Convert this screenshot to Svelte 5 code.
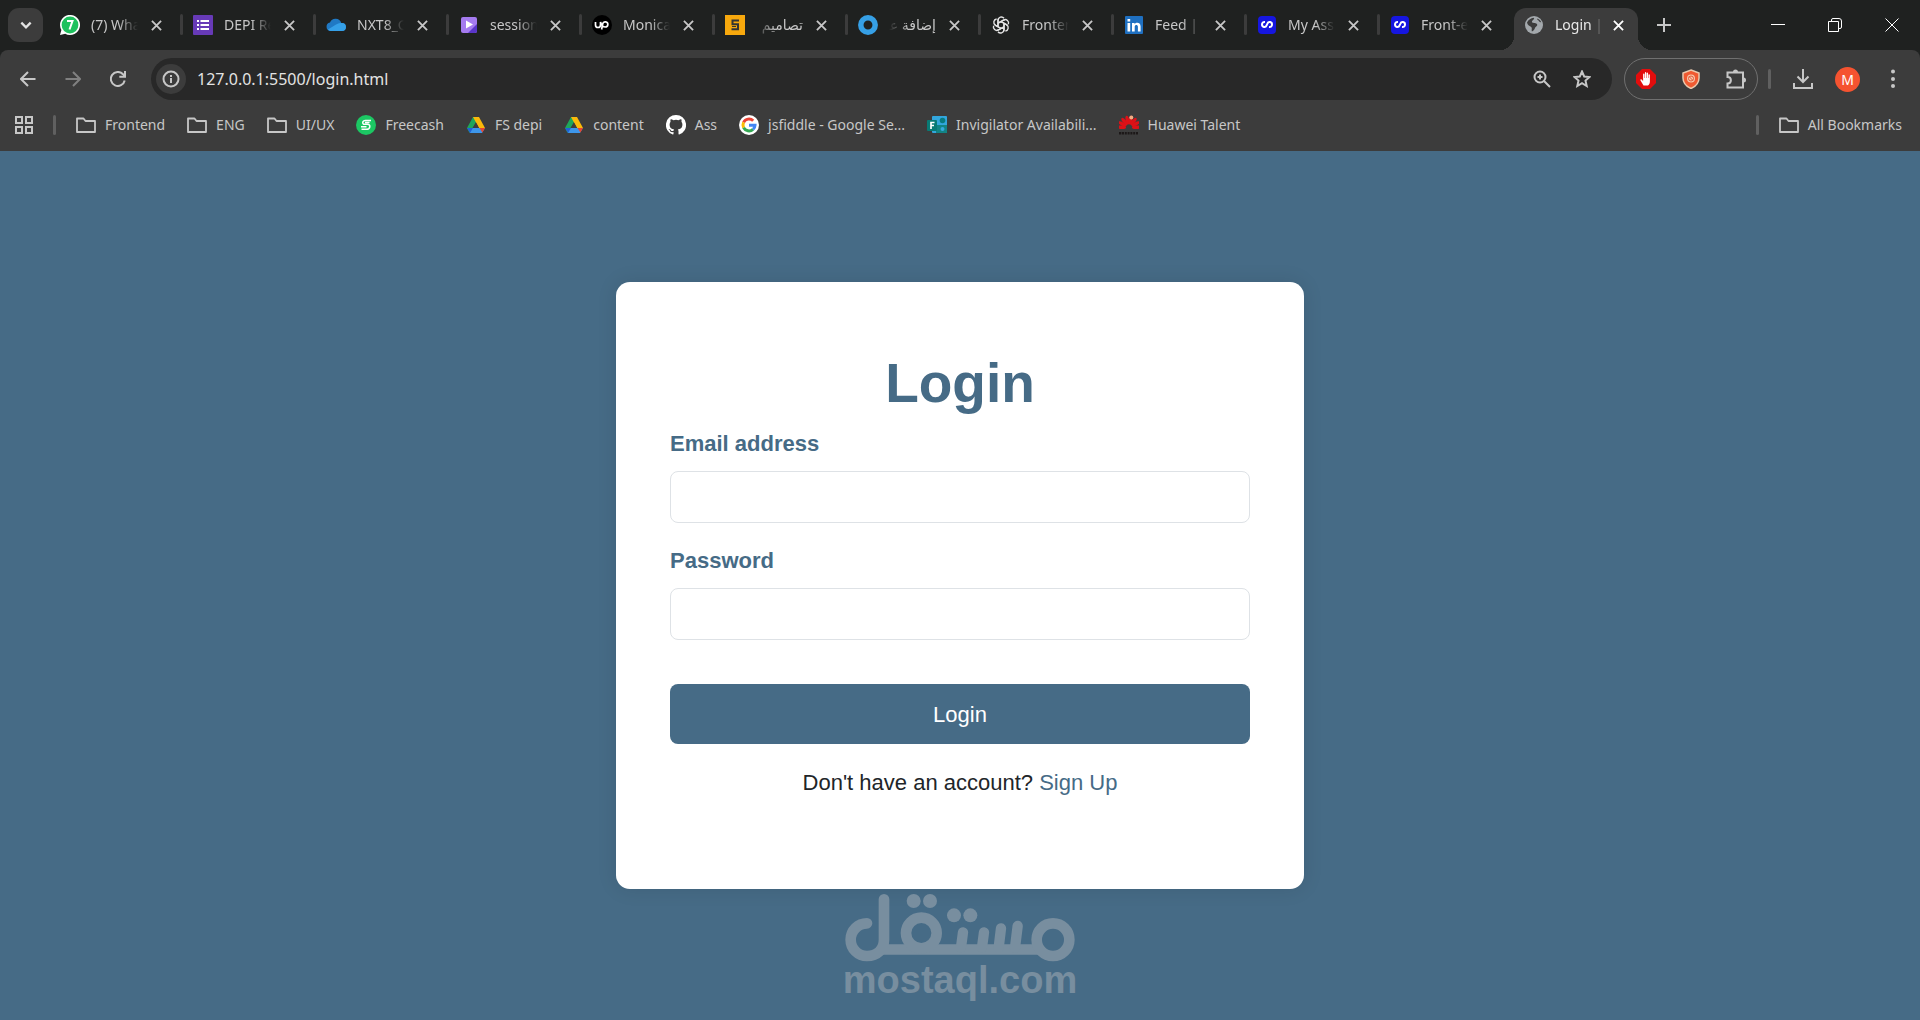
<script>
  const tabs = [
    { icon: 'whatsapp', title: '(7) WhatsApp' },
    { icon: 'forms', title: 'DEPI Register' },
    { icon: 'cloud', title: 'NXT8_G1' },
    { icon: 'video', title: 'session 12' },
    { icon: 'upwork', title: 'Monica' },
    { icon: 'five', title: 'تصاميم', rtl: true },
    { icon: 'ring', title: 'إضافة عمل', rtl: true },
    { icon: 'gpt', title: 'Frontend' },
    { icon: 'linkedin', title: 'Feed | LinkedIn' },
    { icon: 'loop', title: 'My Assign' },
    { icon: 'loop', title: 'Front-end' },
    { icon: 'globe', title: 'Login | Page', active: true }
  ];
  const bookmarks = [
    { icon: 'folder', title: 'Frontend' },
    { icon: 'folder', title: 'ENG' },
    { icon: 'folder', title: 'UI/UX' },
    { icon: 'freecash', title: 'Freecash' },
    { icon: 'drive', title: 'FS depi' },
    { icon: 'drive', title: 'content' },
    { icon: 'github', title: 'Ass' },
    { icon: 'google', title: 'jsfiddle - Google Se...' },
    { icon: 'msforms', title: 'Invigilator Availabili...' },
    { icon: 'huawei', title: 'Huawei Talent' }
  ];
  const petals = [-88, -62, -37, -12, 12, 37, 62, 88];
  const knots = [0, 60, 120, 180, 240, 300];
  let address = $state('127.0.0.1:5500/login.html');
  let email = $state('');
  let password = $state('');
</script>

{#snippet icon(name)}
  <svg class="ico" viewBox="0 0 20 20" aria-hidden="true">
    {#if name === 'whatsapp'}
      <path d="M0 20 1.400 15A10 10 0 1 1 5.200 18.700Z" fill="#fff" />
      <circle cx="10" cy="10" r="8.400" fill="#1fc15e" />
      <path d="M7 6h5.500l-3 8.500" fill="none" stroke="#fff" stroke-width="2" />
    {:else if name === 'forms'}
      <rect width="20" height="20" rx="1" fill="#673ab7" />
      <path d="M7.500 6H16M7.500 10H16M7.500 14H16M4 6h2M4 10h2M4 14h2" stroke="#fff" stroke-width="2" />
    {:else if name === 'cloud'}
      <path d="M4.500 16A4.300 4.300 0 0 1 4 7.500 6 6 0 0 1 15.300 8 4 4 0 0 1 16 16Z" fill="#2079c4" />
      <path d="M2 14.500 10 9.500l3-1.200A5 5 0 0 1 16 8a4 4 0 0 1 0 8H4.500a4 4 0 0 1-2.500-1.500Z" fill="#35a0e8" />
    {:else if name === 'video'}
      <rect x="2" y="2" width="16" height="16" rx="2" fill="#a57bf0" />
      <path d="M18 9v7a2 2 0 0 1-2 2H9Z" fill="#5a35c9" />
      <path d="M7 5.500v8l7-4Z" fill="#fff" />
    {:else if name === 'upwork'}
      <circle cx="10" cy="10" r="10" fill="#000" />
      <path d="M3.500 7v3a2.500 2.500 0 0 0 5 0V7c1 3 2.500 5 4.700 5a2.600 2.600 0 1 0-2.500-3.200L9.600 14.500" fill="none" stroke="#fff" stroke-width="1.700" />
    {:else if name === 'five'}
      <rect width="20" height="20" fill="#f7a80d" />
      <path d="M14 5.500H7.500v3.700H13v5H6.500" fill="none" stroke="#333" stroke-width="2" />
      <path d="M7 11.500h4" stroke="#333" stroke-width="1" />
    {:else if name === 'ring'}
      <circle cx="10" cy="10" r="7.200" fill="none" stroke="#36a0e6" stroke-width="5.500" />
    {:else if name === 'gpt'}
      <g fill="none" stroke="#e4e4e4" stroke-width="1.400">
        {#each knots as a}
          <path transform="rotate({a} 10 10)" d="M7 11.700V5.300a3.400 3.400 0 0 1 6-2.100M7 8.200l5.500-3.100a3.500 3.500 0 0 1 1.500-.4" />
        {/each}
      </g>
    {:else if name === 'linkedin'}
      <rect x="1" y="1" width="18" height="18" rx="1" fill="#1f70c1" />
      <path d="M3.500 8h2.700v8.500H3.500ZM3.500 4h2.700v2.500H3.500ZM8 8h2.600v1.200c1.600-2.300 6-1.800 6 2.200v5.100h-2.700v-4.700c0-2.300-3.200-2.200-3.200 0v4.700H8Z" fill="#fff" />
    {:else if name === 'loop'}
      <rect x="1" y="1" width="18" height="18" rx="4" fill="#1616e0" />
      <path d="M8 7C6.200 6.800 5 7.800 5 9.500c0 2.800 3.600 3.400 4.600.8l.8-1.600c1-2.600 4.600-2 4.600.8 0 1.700-1.200 2.700-3 2.500" fill="none" stroke="#fff" stroke-width="2" />
    {:else if name === 'globe'}
      <circle cx="10" cy="10" r="9" fill="#a3a8ac" />
      <path d="M3 7.500c1.500-3 4-4.500 6.500-4.800 2 1.300-1.200 2.200-1.600 4 .3 1.800 3.600.7 5 2.200 1.500 2-1.800 2.500-2 4.300-.3 1.500-1.800 3-3 3.300-.8-1.800.7-3.300-.7-4.500C6 11 3.400 10.300 3 7.500Z" fill="#3c3c3c" />
      <path d="M13 3.500c.2 2 2.200 1.700 2.400 3.300 1 .8 1.700-.1 2 1.200C17 6 15.500 4 13 3.500Z" fill="#3c3c3c" />
    {:else if name === 'folder'}
      <path d="M1 3.500h6.500l2 2.500H19v11H1Z" fill="none" stroke="#c7c7c7" stroke-width="1.800" stroke-linejoin="round" />
    {:else if name === 'freecash'}
      <circle cx="10" cy="10" r="10" fill="#1cc763" />
      <path d="M15 5.500H9.500C6 5.500 6 9.300 8.500 9.300h3c3.500 0 3 5-1 5H5.500M9 7.500h4.500M5 11.800h5.500" fill="none" stroke="#fff" stroke-width="1.500" />
    {:else if name === 'drive'}
      <path d="M7 2h6l-6.800 11.500L3.500 18 1 13Z" fill="#1ea65a" />
      <path d="M7 2h6l6 11h-6Z" fill="#fbb90a" />
      <path d="M4 13h15l-3 5H4Z" fill="#3d96ea" />
      <path d="M1 13h6l-3 5Z" fill="#2161d8" />
      <path d="M13.500 13H19l-2.600 4.500Z" fill="#e8452f" />
      <path d="M10 7.500 13 13H7Z" fill="#3c3c3c" />
    {:else if name === 'github'}
      <path d="M10 0a10 10 0 0 0-3.200 19.500c.5.100.7-.2.700-.5v-1.900c-2.800.6-3.400-1.200-3.400-1.200-.4-1.100-1.100-1.400-1.100-1.400-.9-.6.1-.6.1-.6 1 .1 1.500 1 1.500 1 .9 1.600 2.400 1.100 2.900.9.100-.7.400-1.100.7-1.400-2.200-.2-4.600-1.100-4.600-4.900 0-1.100.4-2 1-2.700-.1-.2-.4-1.300.1-2.600 0 0 .9-.3 2.800 1a9.500 9.500 0 0 1 5 0c1.900-1.300 2.800-1 2.800-1 .5 1.300.2 2.400.1 2.600.7.700 1 1.600 1 2.700 0 3.800-2.300 4.700-4.600 4.900.4.300.7.900.7 1.900V19c0 .3.200.6.700.5A10 10 0 0 0 10 0Z" fill="#fff" />
    {:else if name === 'google'}
      <circle cx="10" cy="10" r="10" fill="#fff" />
      <g fill="none" stroke-width="3">
        <path d="M14.200 5.800A6 6 0 0 0 4.600 7.400" stroke="#ea4335" />
        <path d="M4.600 7.400a6 6 0 0 0 0 5.200" stroke="#fbbc05" />
        <path d="M4.600 12.600a6 6 0 0 0 9.400 1.800" stroke="#34a853" />
        <path d="M14 14.400A6 6 0 0 0 16 10.300H10" stroke="#4285f4" />
      </g>
    {:else if name === 'msforms'}
      <rect x="5" y="1" width="15" height="17" rx="1" fill="#32a6dd" />
      <rect x="9" y="10" width="11" height="8" fill="#128485" />
      <circle cx="15.500" cy="5.500" r="2.800" fill="#087b80" />
      <circle cx="15.500" cy="14" r="2" fill="#36a9df" />
      <rect y="5" width="10" height="11" rx="1" fill="#087a75" />
      <path d="M4 14V7.500h3.500M4 10.500h3" fill="none" stroke="#fff" stroke-width="1.700" />
    {:else if name === 'huawei'}
      {#each petals as a}
        <ellipse cx="10" cy="5" rx="1.800" ry="4.500" transform="rotate({a} 10 12.500)" fill="#dc1117" />
      {/each}
      <circle cx="12.300" cy="2.500" r="2" fill="#f3ad83" />
      <path d="M0 18.200h2.400m.6 0h2m.8 0h2m.8 0h2m.8 0h2m.8 0h2m.8 0h2" stroke="#1c1818" stroke-width="2.600" />
    {/if}
  </svg>
{/snippet}

{#snippet cross()}
  <svg class="cross" viewBox="0 0 12 12" aria-hidden="true"><path d="m1 1 10 10M11 1 1 11" /></svg>
{/snippet}

<div class="window">
  <header>
    <div class="strip">
      <button class="search" aria-label="Search tabs"><svg viewBox="0 0 12 12"><path d="m2 4 4 4 4-4" /></svg></button>
      <div class="tabs">
        {#each tabs as tab}
          <div class="tab" class:active={tab.active}>
            {@render icon(tab.icon)}
            <button class="title" class:rtl={tab.rtl} dir={tab.rtl ? 'rtl' : 'ltr'}>{tab.title}</button>
            <button class="close" aria-label="Close tab">{@render cross()}</button>
          </div>
        {/each}
      </div>
      <button class="new" aria-label="New tab"><svg viewBox="0 0 14 14"><path d="M7 0v14M0 7h14" /></svg></button>
      <div class="controls">
        <button aria-label="Minimize"><svg viewBox="0 0 14 14"><path d="M0 6.500h14" /></svg></button>
        <button aria-label="Restore"><svg viewBox="0 0 14 14"><path d="M.5 3.500h10v10H.5ZM3.500 3.500V2A1.500 1.500 0 0 1 5 .5h6A2.500 2.500 0 0 1 13.500 3v6a1.500 1.500 0 0 1-1.500 1.500h-1.500" /></svg></button>
        <button aria-label="Close window"><svg viewBox="0 0 14 14"><path d="m.5.5 13 13M13.500.5l-13 13" /></svg></button>
      </div>
    </div>

    <div class="chrome">
      <div class="toolbar">
        <nav class="history">
          <button aria-label="Back"><svg viewBox="0 0 16 16"><path d="M15.500 8H1.500M8 1 1 8l7 7" /></svg></button>
          <button aria-label="Forward" class="dim"><svg viewBox="0 0 16 16"><path d="M.5 8h14M8 1l7 7-7 7" /></svg></button>
          <button aria-label="Reload"><svg viewBox="0 0 16 16"><path d="M14.700 9.500A7 7 0 1 1 13 3.200L15 5.500M15 0v5.800H9.300" /></svg></button>
        </nav>
        <div class="omnibox">
          <button class="info" aria-label="Site information">
            <svg viewBox="0 0 18 18"><circle cx="9" cy="9" r="7.500" /><path d="M9 8v5M9 5v2" /></svg>
          </button>
          <input class="url" aria-label="Address" bind:value={address} />
          <button class="tool" aria-label="Zoom">
            <svg viewBox="0 0 18 18"><circle cx="7" cy="7" r="5.500" /><path d="m11 11 6 6M7 4.500v5M4.500 7h5" /></svg>
          </button>
          <button class="tool" aria-label="Bookmark this tab">
            <svg viewBox="0 0 18 18"><path d="m9 1.500 2.200 5 5.400.5-4.100 3.600 1.200 5.400L9 13.200 4.300 16l1.200-5.400L1.400 7l5.400-.5Z" /></svg>
          </button>
        </div>
        <div class="extensions">
          <button aria-label="AdBlock">
            <svg class="art" viewBox="0 0 20 20"><path d="M6 0h8l6 6v8l-6 6H6l-6-6V6Z" fill="#e30d0d" /><path d="M7.500 16.500 4.500 11.500c-.5-1.400.9-1.700 1.500-.8l1.100 1.500V5.500c0-1.200 1.400-1.200 1.400 0V9h.4V4c0-1.200 1.400-1.200 1.400 0v5h.4V4.500c0-1.200 1.400-1.200 1.400 0V9h.4V6c0-1.100 1.400-1.100 1.400 0v6.500c0 2-1 3.500-2 4Z" fill="#fff" /></svg>
          </button>
          <button aria-label="Ad shield">
            <svg class="art" viewBox="0 0 20 20"><path d="m10 1 8 3v5c0 5-3.500 8.500-8 10.500C5.500 17.500 2 14 2 9V4Z" fill="#f05a31" stroke="#eac9ad" stroke-width="1.500" /><circle cx="10" cy="9.500" r="4" fill="#f7c9ac" /><circle cx="10" cy="9.500" r="2.500" fill="none" stroke="#e35a3a" /><path d="m8.200 7.700 3.600 3.600" stroke="#e35a3a" /></svg>
          </button>
          <button aria-label="Extensions">
            <svg viewBox="0 0 20 20"><path d="M1.500 3.500h15.500v15H1.500v-4c4.500 0 4.500-6.500 0-6.500Z" /><path class="solid" d="M7 3a2.500 2.500 0 0 1 5 0ZM17.500 8.500a2.500 2.500 0 0 1 0 5Z" /></svg>
          </button>
        </div>
        <span class="bar"></span>
        <div class="account">
          <button aria-label="Downloads"><svg viewBox="0 0 20 20"><path d="M10 0v13M4.500 7.500 10 13l5.500-5.500M1 14v5h18v-5" /></svg></button>
          <button class="avatar" aria-label="Profile">M</button>
          <button aria-label="Menu"><svg viewBox="0 0 20 20"><g class="solid"><circle cx="10" cy="2.500" r="2" /><circle cx="10" cy="10" r="2" /><circle cx="10" cy="17" r="2" /></g></svg></button>
        </div>
      </div>

      <nav class="bookmarks">
        <button class="apps" aria-label="Apps"><svg viewBox="0 0 18 18"><path d="M1 1h6v6H1ZM11 1h6v6h-6ZM1 11h6v6H1ZM11 11h6v6h-6Z" /></svg></button>
        <span class="bar"></span>
        <div class="links">
          {#each bookmarks as mark}
            <a href="#bookmark">{@render icon(mark.icon)}{mark.title}</a>
          {/each}
        </div>
        <span class="bar"></span>
        <a class="all" href="#all">{@render icon('folder')}All Bookmarks</a>
      </nav>
    </div>
  </header>

  <main>
    <form class="card" onsubmit={(e) => e.preventDefault()}>
      <h1>Login</h1>
      <label for="email">Email address</label>
      <input id="email" type="email" bind:value={email} />
      <label for="password">Password</label>
      <input id="password" type="password" bind:value={password} />
      <button class="submit">Login</button>
      <p>Don't have an account? <a href="#signup">Sign Up</a></p>
    </form>
    <div class="mark">
      <svg viewBox="75 72 690 204" role="img" aria-label="Mostaql">
        <g fill="none" stroke="#788e9f" stroke-width="32" stroke-linecap="round">
          <path d="M141 160a49 49 0 1 0 0 98c31 0 51-20 51-49V88" />
          <path d="M180 238.500H665" stroke-linecap="butt" />
          <circle cx="304" cy="189" r="46" />
          <circle cx="699" cy="209" r="49" />
          <path d="m429 187-6 45M492 187l-6 45M543 175l-7 58M593 168l-8 65" stroke-width="31" />
        </g>
        <g fill="#788e9f"><circle cx="281" cy="93" r="21" /><circle cx="330" cy="93" r="21" /><circle cx="402" cy="136" r="21" /><circle cx="451" cy="136" r="21" /></g>
      </svg>
      <span>mostaql.com</span>
    </div>
  </main>
</div>

<style>
  :global(body) { margin: 0; }
  .window {
    display: flex;
    flex-direction: column;
    min-height: 100vh;
    font-family: "Noto Sans", "Open Sans", "DejaVu Sans", sans-serif;
    font-size: 14px;
    color: #c7c7c7;
  }
  button, input { font: inherit; color: inherit; box-sizing: border-box; }
  button { padding: 0; border: 0; background: none; display: flex; align-items: center; justify-content: center; }
  a { color: inherit; text-decoration: none; }
  header { background: #1f2120; }
  header svg { display: block; flex: none; fill: none; stroke: #c7c7c7; stroke-width: 2; }
  header svg.ico, header svg.art { width: 20px; height: 20px; stroke: none; stroke-width: 1; }

  .strip { display: flex; height: 50px; }
  .search { width: 35px; height: 34px; margin: 8px 5px 0 8px; border-radius: 11px; background: #3c3c3c; }
  .search svg { width: 14px; height: 14px; stroke: #e3e3e3; }
  .tabs { display: flex; flex: 0 1 1590px; min-width: 0; }
  .tab {
    position: relative;
    display: flex;
    align-items: center;
    flex: 0 1 133px;
    min-width: 0;
    box-sizing: border-box;
    padding: 0 17px 0 12px;
  }
  .tab + .tab:not(.active)::before {
    content: "";
    position: absolute;
    left: -1px;
    top: 14px;
    width: 3px;
    height: 21px;
    border-radius: 2px;
    background: #3c3c3c;
  }
  .title {
    display: block;
    flex: 1;
    min-width: 0;
    margin: 0 10px 0 11px;
    overflow: hidden;
    white-space: nowrap;
    text-align: left;
    line-height: 24px;
    mask-image: linear-gradient(to right, #000 58%, transparent);
  }
  .title.rtl { text-align: right; mask-image: linear-gradient(to left, #000 58%, transparent); }
  .close { width: 16px; height: 20px; }
  .cross { width: 11px; height: 11px; }
  .active { flex-basis: 124px; margin-left: 3px; margin-top: 8px; padding: 0 12px 8px 10px; background: #3c3c3c; border-radius: 12px 12px 0 0; color: #e8e8e8; }
  .active::before, .active::after {
    content: "";
    position: absolute;
    bottom: 0;
    width: 14px;
    height: 14px;
  }
  .active::before { right: 100%; background: radial-gradient(circle at 0 0, transparent 14px, #3c3c3c 14px); }
  .active::after { left: 100%; background: radial-gradient(circle at 100% 0, transparent 14px, #3c3c3c 14px); }
  .active .cross { stroke: #fff; }
  .active .title { margin-right: 8px; mask-image: linear-gradient(to right, #000 76%, transparent); }
  .new { flex: none; width: 52px; height: 50px; }
  .new svg { width: 14px; height: 14px; }
  .controls { display: flex; flex: none; margin-left: auto; }
  .controls button { width: 57px; height: 50px; }
  .controls svg { width: 14px; height: 14px; stroke: #fff; stroke-width: 1; }

  .chrome { background: #3c3c3c; border-radius: 8px 8px 0 0; padding-top: 8px; }
  .toolbar { display: flex; align-items: center; height: 42px; }
  .history { display: flex; gap: 1px; padding: 0 11px 0 6px; }
  .history button { width: 44px; height: 42px; }
  .history svg { width: 16px; height: 16px; }
  .history .dim svg { stroke: #808080; }
  .omnibox { display: flex; align-items: center; flex: 1; min-width: 0; height: 42px; padding: 0 10px 0 5px; border-radius: 21px; background: #282828; }
  .info { width: 30px; height: 30px; border-radius: 50%; background: #3c3c3c; }
  .info svg { width: 18px; height: 18px; }
  .url { flex: 1; min-width: 0; padding: 0; margin-left: 11px; border: 0; outline: 0; background: none; color: #e3e3e3; font-size: 16px; }
  .tool { width: 40px; height: 40px; }
  .tool svg { width: 18px; height: 18px; }
  .extensions { display: flex; align-items: center; gap: 5px; height: 42px; box-sizing: border-box; padding: 0 1px; margin: 0 10px 0 12px; border: 1px solid #707070; border-radius: 21px; }
  .extensions button { width: 40px; height: 40px; }
  .extensions svg { width: 20px; height: 20px; }
  .solid { fill: #c7c7c7; stroke: none; }
  .bar { width: 3px; height: 20px; border-radius: 2px; background: #606060; }
  .account { display: flex; align-items: center; gap: 10px; padding: 0 10px 0 14px; }
  .account button { width: 35px; height: 35px; }
  .account svg { width: 20px; height: 20px; }
  .account .avatar { width: 25px; height: 25px; margin: 0 5px; border-radius: 50%; background: #f55330; color: #fff; }

  .bookmarks { display: flex; align-items: center; height: 49px; padding: 0 18px 2px 15px; }
  .apps { margin-right: 20px; }
  .apps svg { width: 18px; height: 18px; }
  .links { display: flex; flex: 1; min-width: 0; gap: 22px; margin-left: 20px; }
  .bookmarks a { display: flex; align-items: center; gap: 9px; white-space: nowrap; }
  .bookmarks .all { margin-left: 20px; }

  main {
    position: relative;
    display: flex;
    flex: 1;
    align-items: center;
    justify-content: center;
    background: #466b86;
    font-family: "Liberation Sans", Arial, sans-serif;
    font-size: 22px;
    line-height: 33px;
    color: #212529;
  }
  .card {
    width: 100%;
    max-width: 688px;
    box-sizing: border-box;
    padding: 68px 54px 90px;
    border-radius: 14px;
    background: #fff;
    box-shadow: 0 0 20px rgba(0, 0, 0, 0.1);
  }
  h1 { margin: 0 0 11px; font-size: 55px; line-height: 66px; text-align: center; color: #466b86; }
  label { display: block; margin-bottom: 11px; font-weight: 700; color: #466b86; }
  .card input { display: block; width: 100%; height: 52px; margin-bottom: 21px; padding: 8px 16px; border: 1px solid #dee2e6; border-radius: 8px; background: #fff; }
  .submit { width: 100%; height: 60px; margin-top: 44px; border-radius: 8px; background: #466b86; color: #fff; }
  p { margin: 22px 0 0; text-align: center; }
  p a { color: #466b86; }
  .mark {
    position: absolute;
    bottom: 22px;
    left: 0;
    right: 0;
    display: flex;
    flex-direction: column;
    align-items: center;
    font-size: 38px;
    font-weight: 700;
    line-height: 36px;
    color: #788e9f;
    pointer-events: none;
  }
  .mark svg { width: 230px; height: 68px; }
</style>
